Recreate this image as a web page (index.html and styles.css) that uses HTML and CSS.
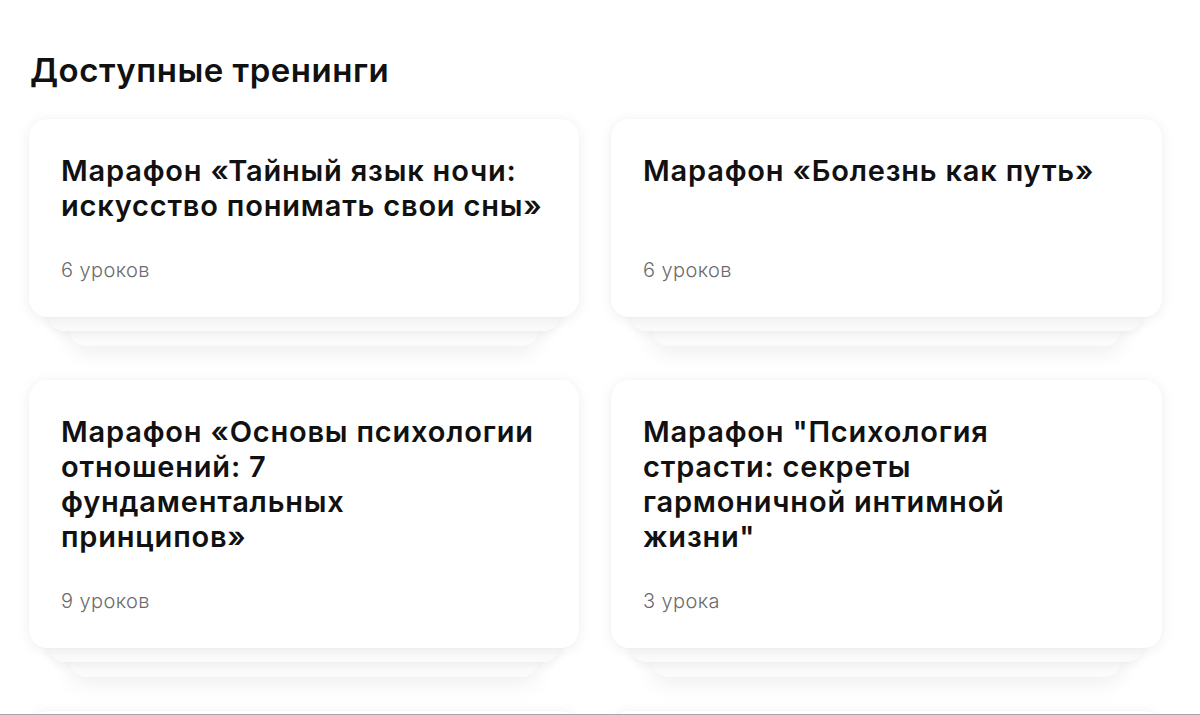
FILE: index.html
```html
<!DOCTYPE html>
<html lang="ru">
<head>
<meta charset="utf-8">
<title>Доступные тренинги</title>
<link rel="stylesheet" href="styles.css">
</head>
<body>
<main class="page">
  <h1 class="page-title">Доступные тренинги</h1>
  <section class="grid">
    <article class="stack">
      <div class="card">
        <h2 class="card-title">Марафон «Тайный язык ночи:<br>искусство понимать свои сны»</h2>
        <p class="card-meta">6 уроков</p>
      </div>
    </article>
    <article class="stack">
      <div class="card">
        <h2 class="card-title">Марафон «Болезнь как путь»</h2>
        <p class="card-meta">6 уроков</p>
      </div>
    </article>
    <article class="stack">
      <div class="card">
        <h2 class="card-title">Марафон «Основы психологии<br>отношений: 7<br>фундаментальных<br>принципов»</h2>
        <p class="card-meta">9 уроков</p>
      </div>
    </article>
    <article class="stack">
      <div class="card">
        <h2 class="card-title">Марафон "Психология<br>страсти: секреты<br>гармоничной интимной<br>жизни"</h2>
        <p class="card-meta">3 урока</p>
      </div>
    </article>
    <article class="stack">
      <div class="card card-empty"></div>
    </article>
    <article class="stack">
      <div class="card card-empty"></div>
    </article>
  </section>
</main>
<div class="bottom-line"></div>
</body>
</html>
```

FILE: styles.css
```css
* { box-sizing: border-box; }
html, body { margin: 0; padding: 0; background: #fff; }
body {
  font-family: Inter, "Noto Sans", "Liberation Sans", sans-serif;
  color: #111;
  overflow: hidden;
  height: 715px;
}
.page {
  padding: 47px 38px 0 29px;
}
.page-title {
  margin: 0 0 0 1px;
  font-size: 33px;
  line-height: 46px;
  font-weight: 600;
  letter-spacing: 0.5px;
  color: #111;
}
.grid {
  margin-top: 26px;
  display: grid;
  grid-template-columns: 550px 551px;
  column-gap: 32px;
  row-gap: 63px;
}
.stack {
  position: relative;
  isolation: isolate;
  display: flex;
}
.stack::before,
.stack::after {
  content: "";
  position: absolute;
  height: 80px;
  background: #fbfbfc;
  border-radius: 16px;
}
.stack::before {
  left: 19px;
  right: 19px;
  bottom: -14px;
  z-index: -1;
  box-shadow: 0 3px 10px rgba(20, 20, 40, 0.06);
}
.stack::after {
  left: 41px;
  right: 41px;
  bottom: -29px;
  z-index: -2;
  box-shadow: 0 6px 22px rgba(20, 20, 40, 0.07);
}
.card {
  flex: 1;
  display: flex;
  flex-direction: column;
  background: #fff;
  border-radius: 18px;
  padding: 34px 32px 32px 32px;
  box-shadow: 0 2px 14px rgba(20, 20, 40, 0.07), 0 0 2px rgba(20, 20, 40, 0.03);
}
.card-empty {
  min-height: 198px;
}
.card-title {
  margin: 0;
  font-size: 29px;
  line-height: 35px;
  font-weight: 600;
  letter-spacing: 0.8px;
  color: #111;
}
.card-meta {
  margin: auto 0 0;
  padding-top: 32px;
  font-size: 20px;
  line-height: 30px;
  font-weight: 300;
  letter-spacing: 0.4px;
  color: #6b6b6b;
}
.bottom-line {
  position: fixed;
  left: 0;
  right: 0;
  bottom: 0;
  height: 1px;
  background: #a6a6a6;
}
```
